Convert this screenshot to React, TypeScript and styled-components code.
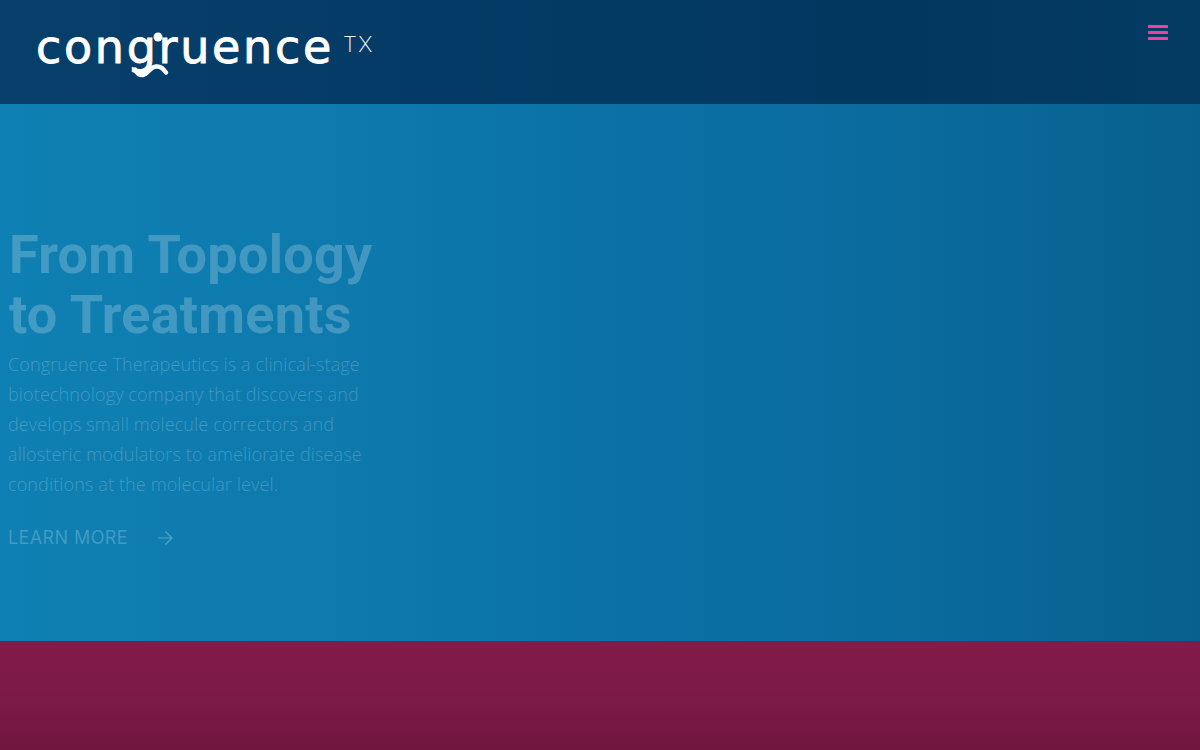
import React from "react";
import styled, { createGlobalStyle } from "styled-components";

const GlobalStyle = createGlobalStyle`
  html, body {
    margin: 0;
    padding: 0;
    height: 100%;
    overflow: hidden;
    background: #7a1a47;
  }
  * {
    box-sizing: border-box;
  }
`;

const Page = styled.div`
  width: 100%;
  height: 750px;
  display: flex;
  flex-direction: column;
`;

const Header = styled.header`
  height: 104px;
  flex: none;
  display: flex;
  justify-content: space-between;
  align-items: flex-start;
  padding: 21px 32px 0 36px;
  background: linear-gradient(90deg, #073f6b 0%, #033a64 50%, #023760 72%, #043b63 100%);
`;

const Logo = styled.a`
  display: flex;
  align-items: flex-start;
  gap: 12px;
  color: #fff;
  text-decoration: none;
`;

const WordmarkBlock = styled.div`
  position: relative;
  width: 295px;
  height: 56px;
`;

const Wordmark = styled.span`
  display: block;
  font-family: "DejaVu Sans", "Liberation Sans", sans-serif;
  font-size: 46px;
  line-height: 52px;
  letter-spacing: 2.7px;
  white-space: nowrap;
  -webkit-text-stroke: 0.9px #fff;
`;

const Swash = styled.svg`
  position: absolute;
  left: 92px;
  top: 9px;
`;

const Suffix = styled.span`
  font-family: "Inter", "Liberation Sans", sans-serif;
  font-size: 22px;
  font-weight: 200;
  line-height: 30px;
  letter-spacing: 1.5px;
  margin-top: 8px;
`;

const MenuButton = styled.button`
  display: flex;
  border: 0;
  padding: 0;
  margin-top: 3px;
  background: none;
  color: #f23fa6;
`;

const Hero = styled.section`
  height: 537px;
  flex: none;
  display: flex;
  flex-direction: column;
  padding: 121px 0 0 8px;
  background: linear-gradient(90deg, #0f80b3 0%, #0d78ac 33%, #0b70a6 52%, #0a6a9c 78%, #08608d 100%);
`;

const Title = styled.h1`
  margin: 0 0 0 1px;
  font-family: "Roboto", "Liberation Sans", sans-serif;
  font-size: 54px;
  font-weight: 700;
  line-height: 60px;
  letter-spacing: 0.25px;
  color: rgba(255, 255, 255, 0.22);
`;

const Lead = styled.p`
  margin: 4px 0 0;
  width: 380px;
  font-family: "Open Sans", "Liberation Sans", sans-serif;
  font-size: 18px;
  font-weight: 300;
  line-height: 30px;
  letter-spacing: 0.13px;
  color: rgba(255, 255, 255, 0.22);
`;

const LearnMore = styled.a`
  display: flex;
  align-items: center;
  gap: 30px;
  margin-top: 24px;
  font-family: "Inter", "Liberation Sans", sans-serif;
  font-size: 18px;
  font-weight: 400;
  line-height: 30px;
  letter-spacing: 0.4px;
  color: rgba(255, 255, 255, 0.22);
  text-decoration: none;
`;

const Arrow = styled.svg`
  flex: none;
`;

const Band = styled.section`
  flex: 1;
  background: linear-gradient(180deg, #841a4a 0%, #7c1a47 50%, #70163f 100%);
`;

export default function App() {
  return (
    <Page>
      <GlobalStyle />
      <Header>
        <Logo href="#">
          <WordmarkBlock>
            <Wordmark>congruence</Wordmark>
            <Swash width="50" height="50" viewBox="0 0 50 50" fill="none" aria-hidden="true">
              <circle cx="30" cy="7" r="4.500" fill="#fff" />
              <path
                d="M7 39.500c2 4 5 6 8 5.500c5 -1 7 -8 13 -8.500c5 -.5 7 2 10 6"
                stroke="#fff"
                strokeWidth="4.500"
                strokeLinecap="round"
              />
            </Swash>
          </WordmarkBlock>
          <Suffix>TX</Suffix>
        </Logo>
        <MenuButton aria-label="Menu">
          <svg width="20" height="17" viewBox="0 0 20 17" fill="currentColor">
            <rect y="1" width="20" height="3" rx="0.500" />
            <rect y="7" width="20" height="3" rx="0.500" />
            <rect y="13" width="20" height="3" rx="0.500" />
          </svg>
        </MenuButton>
      </Header>
      <Hero>
        <Title>
          From Topology
          <br />
          to Treatments
        </Title>
        <Lead>
          Congruence Therapeutics is a clinical-stage biotechnology company that discovers and
          develops small molecule correctors and allosteric modulators to ameliorate disease
          conditions at the molecular level.
        </Lead>
        <LearnMore href="#">
          LEARN MORE
          <Arrow width="15" height="16" viewBox="0 0 15 16" fill="none" stroke="rgba(255,255,255,0.3)" strokeWidth="1.2">
            <path d="M0 8h14M7.500 1.500 14 8l-6.500 6.500" />
          </Arrow>
        </LearnMore>
      </Hero>
      <Band />
    </Page>
  );
}
